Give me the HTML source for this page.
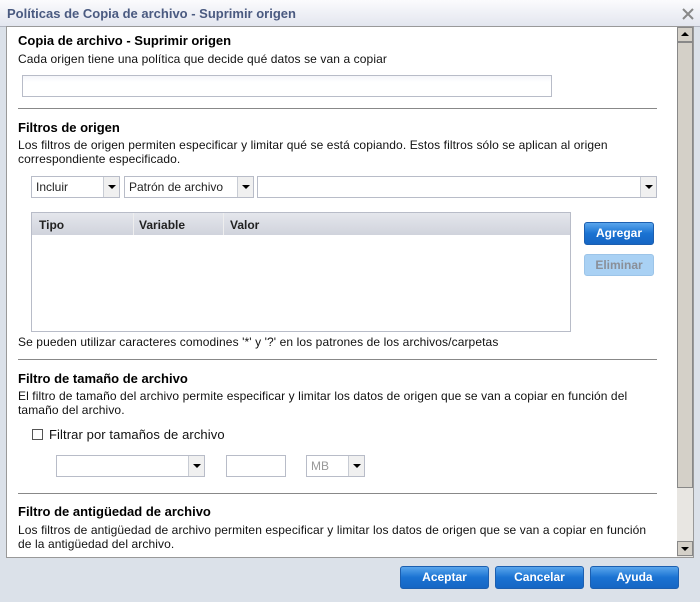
<!DOCTYPE html>
<html><head><style>
*{margin:0;padding:0;box-sizing:border-box}
body{width:700px;height:602px;overflow:hidden;background:#dbe1e9;font-family:"Liberation Sans",Tahoma,sans-serif;font-size:12px;color:#222;position:relative}
.a{position:absolute}
.title{left:0;top:0;width:700px;height:27px;background:linear-gradient(#fbfbfd,#e3e6ef);border-bottom:1px solid #b0b4c0}
.title span{position:absolute;left:7px;top:6px;font-weight:bold;font-size:13px;color:#4a5a80}
.content{left:6px;top:26px;width:688px;height:532px;background:#fff;border:1px solid #999;overflow:hidden}
h3{position:absolute;font-size:13px;font-weight:bold;color:#000;left:18px}
.t{position:absolute;left:18px;font-size:12px;line-height:14px;color:#111;letter-spacing:0.1px}
.hr{position:absolute;left:18px;width:639px;height:1px;background:#888}
.in{position:absolute;border:1px solid #b8bcc8;background:linear-gradient(#f4f5f9,#fff 30%);}
.sel{position:absolute;border:1px solid #b8bcc8;background:#fff;font-size:12px;padding:3px 0 0 4px}
.sel i{position:absolute;right:0;top:0;width:16px;height:100%;border-left:1px solid #c8ccd4;background:#f0f0f0}
.sel i:after{content:"";position:absolute;left:4px;top:8px;border-left:4px solid transparent;border-right:4px solid transparent;border-top:4px solid #000}
.btn{position:absolute;border-radius:3px;color:#fff;font-weight:bold;font-size:12px;text-align:center;line-height:21px;border:1px solid #1c5fb0;background:linear-gradient(#5aa6ec,#1a72d2 50%,#1666c4)}
</style></head><body>
<div class="a title"><span>Políticas de Copia de archivo - Suprimir origen</span>
<svg class="a" style="left:682px;top:8px" width="12" height="12"><path d="M1 1L11 11M11 1L1 11" stroke="#888" stroke-width="2"/></svg></div>
<div class="a content">
<div style="position:absolute;left:-7px;top:-27px;width:700px;height:602px">
<h3 style="top:33px">Copia de archivo - Suprimir origen</h3>
<div class="t" style="top:52px">Cada origen tiene una política que decide qué datos se van a copiar</div>
<div class="in" style="left:22px;top:75px;width:530px;height:22px"></div>
<div class="hr" style="top:108px"></div>
<h3 style="top:120px">Filtros de origen</h3>
<div class="t" style="top:138px">Los filtros de origen permiten especificar y limitar qué se está copiando. Estos filtros sólo se aplican al origen<br>correspondiente especificado.</div>
<div class="sel" style="left:31px;top:176px;width:89px;height:22px">Incluir<i></i></div>
<div class="sel" style="left:124px;top:176px;width:130px;height:22px">Patrón de archivo<i></i></div>
<div class="sel" style="left:257px;top:176px;width:400px;height:22px"><i></i></div>
<div class="a" style="left:31px;top:212px;width:540px;height:120px;border:1px solid #b8bcc8;background:#fff">
<div style="height:22px;background:linear-gradient(#e4e6ec,#d0d3dc);font-weight:bold;font-size:12px;position:relative">
<span class="a" style="left:7px;top:5px">Tipo</span><span class="a" style="left:101px;top:0;height:22px;border-left:1px solid #eee"></span>
<span class="a" style="left:107px;top:5px">Variable</span><span class="a" style="left:191px;top:0;height:22px;border-left:1px solid #eee"></span>
<span class="a" style="left:198px;top:5px">Valor</span></div></div>
<div class="btn" style="left:584px;top:222px;width:70px;height:23px">Agregar</div>
<div class="btn" style="left:584px;top:254px;width:70px;height:22px;background:#a9d1f4;border-color:#9cc4e8;color:#8a8f98">Eliminar</div>
<div class="t" style="top:335px">Se pueden utilizar caracteres comodines '*' y '?' en los patrones de los archivos/carpetas</div>
<div class="hr" style="top:359px"></div>
<h3 style="top:371px">Filtro de tamaño de archivo</h3>
<div class="t" style="top:389px">El filtro de tamaño del archivo permite especificar y limitar los datos de origen que se van a copiar en función del<br>tamaño del archivo.</div>
<div class="a" style="left:32px;top:429px;width:11px;height:11px;border:1px solid #555;background:#fff"></div>
<div class="t" style="left:49px;top:428px;font-size:13px">Filtrar por tamaños de archivo</div>
<div class="sel" style="left:56px;top:455px;width:149px;height:22px"><i></i></div>
<div class="sel" style="left:226px;top:455px;width:60px;height:22px"></div>
<div class="sel" style="left:306px;top:455px;width:59px;height:22px;color:#999">MB<i></i></div>
<div class="hr" style="top:493px"></div>
<h3 style="top:504px">Filtro de antigüedad de archivo</h3>
<div class="t" style="top:523px">Los filtros de antigüedad de archivo permiten especificar y limitar los datos de origen que se van a copiar en función<br>de la antigüedad del archivo.</div>
<div class="a" style="left:677px;top:27px;width:16px;height:530px;background:#e8e6e2"></div>
<div class="a" style="left:677px;top:27px;width:16px;height:15px;background:#d4d0c8;border:1px solid #888"><div style="position:absolute;left:3px;top:4px;border-left:4px solid transparent;border-right:4px solid transparent;border-bottom:4px solid #000"></div></div>
<div class="a" style="left:677px;top:42px;width:16px;height:446px;background:#d4d0c8;border:1px solid #888"></div>
<div class="a" style="left:677px;top:541px;width:16px;height:15px;background:#d4d0c8;border:1px solid #888"><div style="position:absolute;left:3px;top:5px;border-left:4px solid transparent;border-right:4px solid transparent;border-top:4px solid #000"></div></div>
</div></div>
<div class="btn" style="left:400px;top:566px;width:89px;height:23px">Aceptar</div>
<div class="btn" style="left:495px;top:566px;width:89px;height:23px">Cancelar</div>
<div class="btn" style="left:590px;top:566px;width:89px;height:23px">Ayuda</div>
</body></html>
